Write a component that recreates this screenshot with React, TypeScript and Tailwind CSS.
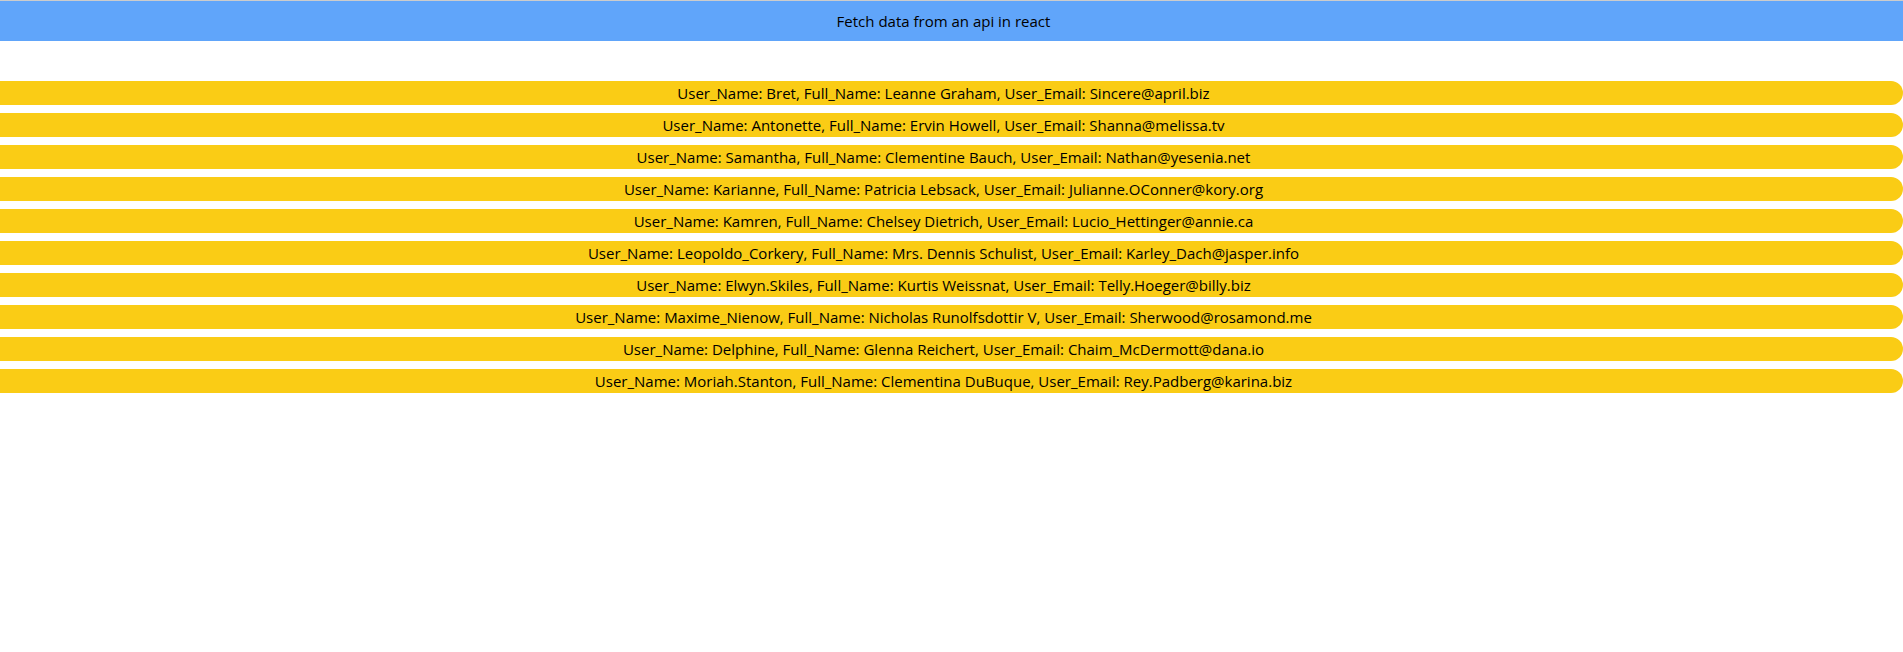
const users = [
  { username: "Bret", name: "Leanne Graham", email: "Sincere@april.biz" },
  { username: "Antonette", name: "Ervin Howell", email: "Shanna@melissa.tv" },
  { username: "Samantha", name: "Clementine Bauch", email: "Nathan@yesenia.net" },
  { username: "Karianne", name: "Patricia Lebsack", email: "Julianne.OConner@kory.org" },
  { username: "Kamren", name: "Chelsey Dietrich", email: "Lucio_Hettinger@annie.ca" },
  { username: "Leopoldo_Corkery", name: "Mrs. Dennis Schulist", email: "Karley_Dach@jasper.info" },
  { username: "Elwyn.Skiles", name: "Kurtis Weissnat", email: "Telly.Hoeger@billy.biz" },
  { username: "Maxime_Nienow", name: "Nicholas Runolfsdottir V", email: "Sherwood@rosamond.me" },
  { username: "Delphine", name: "Glenna Reichert", email: "Chaim_McDermott@dana.io" },
  { username: "Moriah.Stanton", name: "Clementina DuBuque", email: "Rey.Padberg@karina.biz" },
];

const App = () => {
  return (
    <div className="min-h-[652px] bg-white border-t border-[#cccccc] font-['Open_Sans',sans-serif] text-[15px] text-black">
      <header className="h-10 bg-[#60a5fa] flex items-center justify-center pr-4">
        <h1>Fetch data from an api in react</h1>
      </header>

      <ul className="mt-10 flex flex-col gap-2">
        {users.map((u) => (
          <li
            key={u.username}
            className="h-6 leading-6 bg-[#facc15] rounded-r-full text-center pr-4"
          >
            User_Name: {u.username}, Full_Name: {u.name}, User_Email: {u.email}
          </li>
        ))}
      </ul>
    </div>
  );
};

export default App;
